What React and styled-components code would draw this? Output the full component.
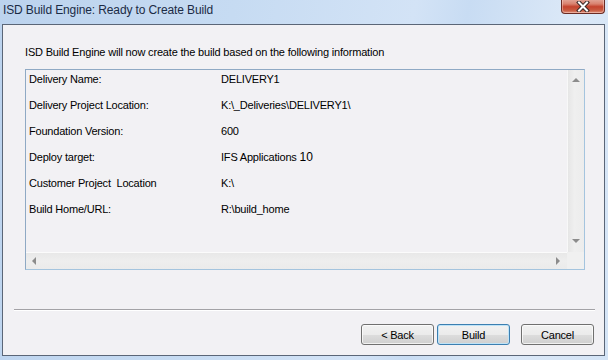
import React from "react";
import styled, { createGlobalStyle, css } from "styled-components";

const GlobalStyle = createGlobalStyle`
  html, body { margin: 0; padding: 0; }
  body {
    font-family: "Liberation Sans", Arial, sans-serif;
    background: #c6dbf2;
  }
`;

const Frame = styled.div`
  width: 608px;
  height: 360px;
  display: flex;
  flex-direction: column;
  box-sizing: border-box;
  padding: 0 3px 4px 2px;
  background: linear-gradient(100deg, #bcd3ee 0%, #c6dbf2 35%, #d3e3f6 62%, #c8dcf3 70%, #dbe8f7 85%, #d4e4f6 100%);
`;

const TitleBar = styled.div`
  height: 24px;
  display: flex;
  align-items: flex-start;
  justify-content: space-between;
  flex: none;
`;

const Title = styled.div`
  font-family: "Liberation Sans", Arial, sans-serif;
  font-size: 12px;
  line-height: 14px;
  letter-spacing: -0.12px;
  color: #1b2b45;
  padding: 3px 0 0 1px;
`;

const CloseButton = styled.div`
  width: 44px;
  height: 15px;
  margin-top: -1px;
  box-sizing: border-box;
  border: 1px solid #6a2b24;
  border-top: none;
  border-radius: 0 0 4px 4px;
  background: linear-gradient(to bottom, #e2a89b 0%, #d9826f 35%, #c4432e 55%, #c85a40 80%, #e0907a 100%);
  display: flex;
  align-items: center;
  justify-content: center;
  box-shadow: inset 0 0 0 1px rgba(255, 220, 210, 0.45);
`;

const Client = styled.div`
  flex: 1;
  display: flex;
  flex-direction: column;
  border: 1px solid #5b6677;
  background: #f2f1f4;
`;

const Intro = styled.div`
  font-size: 11px;
  line-height: 13px;
  letter-spacing: -0.18px;
  color: #000;
  margin: 21px 0 0 22px;
`;

const ListBox = styled.div`
  margin: 10px 0 0 22px;
  width: 560px;
  height: 201px;
  box-sizing: border-box;
  border: 1px solid #a4c4de;
  border-left-color: #8fa9c4;
  border-top-color: #8fa9c4;
  display: grid;
  grid-template-columns: 1fr 17px;
  grid-template-rows: 1fr 17px;
`;

const ListContent = styled.div`
  padding-left: 3px;
  overflow: hidden;
`;

const Row = styled.div`
  display: flex;
  height: 26px;
  padding-top: 3px;
  box-sizing: border-box;
  font-size: 11px;
  line-height: 13px;
  letter-spacing: -0.2px;
  color: #000;
  white-space: pre;
`;

const Label = styled.div`
  width: 192px;
  flex: none;
`;

const Value = styled.div``;

const Big = styled.span`
  font-size: 12px;
  letter-spacing: 0;
`;

const VScroll = styled.div`
  background: linear-gradient(to right, #e6e6e6, #efefef 40%, #ececec);
  border-left: 1px solid #f8f8f8;
  display: flex;
  flex-direction: column;
  justify-content: space-between;
  align-items: center;
  padding: 8px 0 9px;
`;

const HScroll = styled.div`
  background: linear-gradient(to bottom, #e8e8e8, #eeeeee 50%, #ebebeb);
  border-top: 1px solid #fbfbfb;
  display: flex;
  justify-content: space-between;
  align-items: center;
  padding: 0 7px 0 6px;
`;

const Corner = styled.div`
  background: #f0f0f0;
`;

const arrowShapes = {
  up: css`
    border-left: 4px solid transparent;
    border-right: 4px solid transparent;
    border-bottom: 4px solid #8c8c8c;
  `,
  down: css`
    border-left: 4px solid transparent;
    border-right: 4px solid transparent;
    border-top: 4px solid #8c8c8c;
  `,
  left: css`
    border-top: 4px solid transparent;
    border-bottom: 4px solid transparent;
    border-right: 4px solid #8c8c8c;
  `,
  right: css`
    border-top: 4px solid transparent;
    border-bottom: 4px solid transparent;
    border-left: 4px solid #8c8c8c;
  `,
};

const Arrow = styled.div`
  width: 0;
  height: 0;
  ${(p) => arrowShapes[p.$dir]}
`;

const Separator = styled.div`
  margin: 39px 0 0 11px;
  width: 581px;
  height: 1px;
  background: #a3a2a6;
  box-shadow: 0 1px 0 #ffffff;
`;

const ButtonRow = styled.div`
  display: flex;
  justify-content: flex-end;
  margin-top: 14px;
  padding-right: 10px;
`;

const Button = styled.div`
  width: 73px;
  height: 21px;
  box-sizing: border-box;
  margin-left: ${(p) => p.$gap}px;
  border: 1px solid ${(p) => (p.$default ? "#3c7fb1" : "#707070")};
  border-radius: 3px;
  background: linear-gradient(to bottom, #f2f2f2 0%, #ebebeb 50%, #dddddd 51%, #cfcfcf 100%);
  box-shadow: inset 0 0 0 1px ${(p) => (p.$default ? "#bfe3f7" : "rgba(255,255,255,0.7)")};
  display: flex;
  align-items: center;
  justify-content: center;
  font-size: 11px;
  letter-spacing: -0.2px;
  color: #000;
`;

const rows = [
  ["Delivery Name:", "DELIVERY1"],
  ["Delivery Project Location:", "K:\\_Deliveries\\DELIVERY1\\"],
  ["Foundation Version:", "600"],
  ["Deploy target:", <>IFS Applications <Big>10</Big></>],
  ["Customer Project  Location", "K:\\"],
  ["Build Home/URL:", "R:\\build_home"],
];

export default function App() {
  return (
    <>
      <GlobalStyle />
      <Frame>
        <TitleBar>
          <Title>ISD Build Engine: Ready to Create Build</Title>
          <CloseButton>
            <svg width="14" height="11" viewBox="0 0 14 11">
              <path d="M3 1.5 L11 9.5 M11 1.5 L3 9.5" stroke="#3b2a28" strokeWidth="4" strokeLinecap="square" />
              <path d="M3 1.5 L11 9.5 M11 1.5 L3 9.5" stroke="#ffffff" strokeWidth="2" strokeLinecap="square" />
            </svg>
          </CloseButton>
        </TitleBar>
        <Client>
          <Intro>ISD Build Engine will now create the build based on the following information</Intro>
          <ListBox>
            <ListContent>
              {rows.map(([label, value], i) => (
                <Row key={i}>
                  <Label>{label}</Label>
                  <Value>{value}</Value>
                </Row>
              ))}
            </ListContent>
            <VScroll>
              <Arrow $dir="up" />
              <Arrow $dir="down" />
            </VScroll>
            <HScroll>
              <Arrow $dir="left" />
              <Arrow $dir="right" />
            </HScroll>
            <Corner />
          </ListBox>
          <Separator />
          <ButtonRow>
            <Button $gap={0}>&lt; Back</Button>
            <Button $gap={3} $default>Build</Button>
            <Button $gap={11}>Cancel</Button>
          </ButtonRow>
        </Client>
      </Frame>
    </>
  );
}
